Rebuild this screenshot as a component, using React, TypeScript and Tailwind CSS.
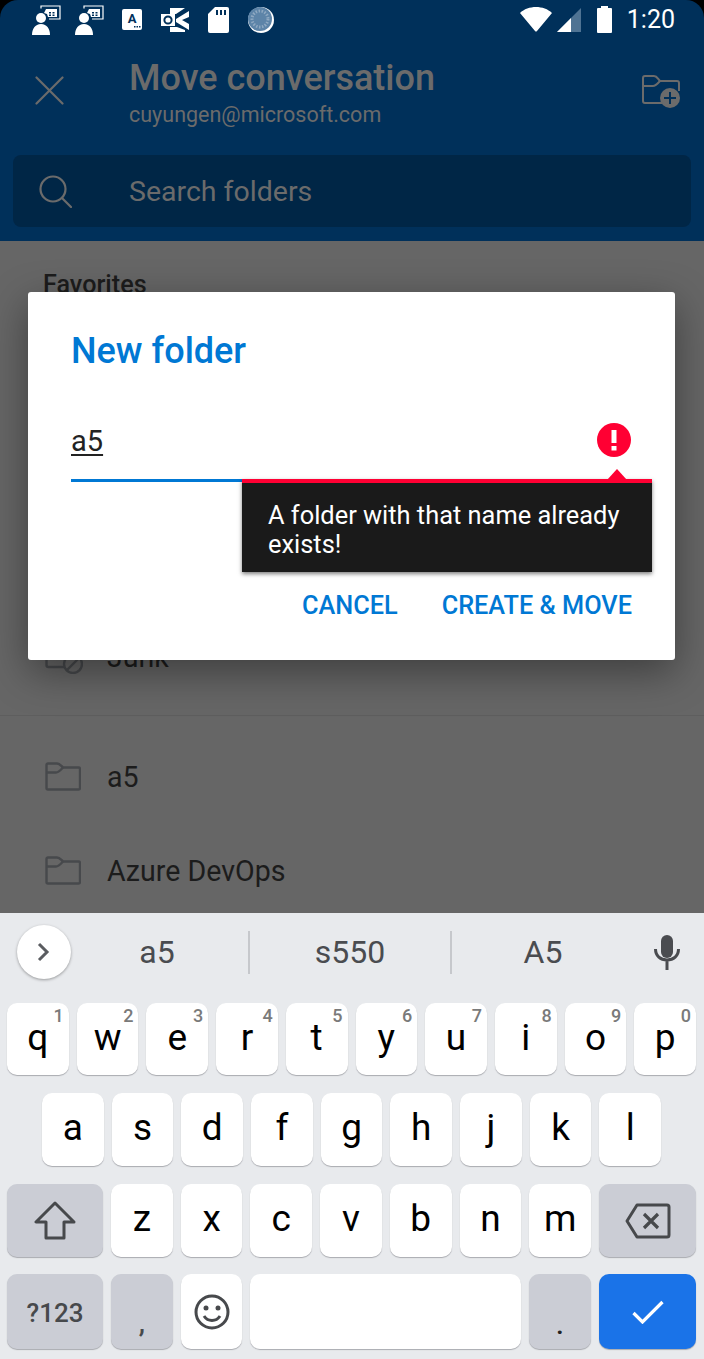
import type { ReactNode } from "react";

const row1 = [
  ["q", "1"],
  ["w", "2"],
  ["e", "3"],
  ["r", "4"],
  ["t", "5"],
  ["y", "6"],
  ["u", "7"],
  ["i", "8"],
  ["o", "9"],
  ["p", "0"],
];
const row2 = ["a", "s", "d", "f", "g", "h", "j", "k", "l"];
const row3 = ["z", "x", "c", "v", "b", "n", "m"];

function PresenterIcon() {
  return (
    <svg width="30" height="30" viewBox="0 0 30 30" fill="none">
      <circle cx="10" cy="13" r="5" fill="#fff" />
      <path d="M1 30c0-6 3-11 9-11s9 5 9 11z" fill="#fff" />
      <path d="M10 3.500V1h19v13H18" stroke="#fff" strokeWidth="1.200" />
      <path d="M15 4h11v8h-9l-1-3-3-1z" fill="#fff" />
      <path d="M18 7h2v1.500h-2zM21.500 7h2v1.500h-2zM21.500 9.500h2V11h-2zM18 9.500h2V11h-2z" fill="#00305a" />
    </svg>
  );
}

function StatusLeft() {
  return (
    <div className="flex items-center">
      <div className="ml-[31px]">
        <PresenterIcon />
      </div>
      <div className="ml-[13px]">
        <PresenterIcon />
      </div>
      <svg className="ml-[18px]" width="20" height="21" viewBox="0 0 20 21">
        <rect width="20" height="21" rx="2" fill="#fff" />
        <text x="10" y="14" fontFamily="Roboto" fontWeight="700" fontSize="13" textAnchor="middle" fill="#00305a">
          A
        </text>
        <path d="M12 17h1.500v1.500H12zM14.500 17H16v1.500h-1.500zM17 17h1.500v1.500H17z" fill="#00305a" />
      </svg>
      <svg className="ml-[19px]" width="29" height="24" viewBox="0 0 29 24">
        <path d="M0 6h14v12H0z" fill="#fff" />
        <circle cx="7" cy="12" r="3.600" fill="none" stroke="#00305a" strokeWidth="2" />
        <path d="M9 0h15l-9 6H9zM15 11l13-8v6l-7 3 7 4v6l-13-8zM9 19h7l8 3v2H9z" fill="#fff" />
      </svg>
      <svg className="ml-[18px]" width="21" height="26" viewBox="0 0 21 26">
        <path d="M7 0h12a2 2 0 0 1 2 2v22a2 2 0 0 1-2 2H2a2 2 0 0 1-2-2V7z" fill="#fff" />
        <path d="M8 3h2v5H8zM12 3h2v5h-2zM16 3h2v5h-2z" fill="#00305a" />
      </svg>
      <svg className="ml-[19px]" width="26" height="26" viewBox="0 0 26 26">
        <circle cx="13" cy="13" r="13" fill="#fff" />
        <circle cx="12" cy="12" r="12" fill="#5d84a8" />
        <circle cx="12" cy="12" r="8" fill="none" stroke="#8fa9c2" strokeWidth="3" strokeDasharray="1.500 1.500" />
      </svg>
    </div>
  );
}

function StatusRight() {
  return (
    <div className="flex items-center">
      <svg width="32" height="25" viewBox="0 0 32 25">
        <path d="M0 6C4 2 10 0 16 0s12 2 16 6L17 24a1.300 1.300 0 0 1-2 0z" fill="#fff" />
      </svg>
      <svg className="ml-[5px]" width="24" height="24" viewBox="0 0 24 24">
        <path d="M24 0v24H0z" fill="#4f7393" />
        <path d="M14 10v14H0z" fill="#fff" />
      </svg>
      <svg className="ml-[16px]" width="15" height="27" viewBox="0 0 15 27">
        <path d="M4 2V0h7v2h3a1 1 0 0 1 1 1v23a1 1 0 0 1-1 1H1a1 1 0 0 1-1-1V3a1 1 0 0 1 1-1z" fill="#fff" />
      </svg>
      <span className="ml-[15px] mr-[29px] text-[25px] leading-none text-white">1:20</span>
    </div>
  );
}

function Header() {
  return (
    <header className="h-[241px] bg-[#00305a]">
      <div className="flex h-[38px] items-center justify-between pt-[1px]">
        <StatusLeft />
        <StatusRight />
      </div>
      <div className="flex h-[117px] items-start">
        <svg className="ml-[35px] mt-[38px]" width="29" height="29" viewBox="0 0 29 29" fill="none" stroke="#6b6b6b" strokeWidth="2.200" strokeLinecap="round">
          <path d="M1.500 1.500l26 26M27.500 1.500l-26 26" />
        </svg>
        <div className="ml-[65px] flex-1 pt-[20px]">
          <div className="text-[36px] font-medium leading-[40px] text-[#6b6b6b]">Move conversation</div>
          <div className="mt-[4px] text-[21.500px] leading-[26px] text-[#6b6b6b]">cuyungen@microsoft.com</div>
        </div>
        <svg className="mr-[22px] mt-[37px]" width="40" height="34" viewBox="0 0 40 34" fill="none">
          <path
            d="M1 26V3a2 2 0 0 1 2-2h9c3 0 4 3 6 5h17a2 2 0 0 1 2 2v8M1 11h10c3 0 5-3 7-5M1 26a2 2 0 0 0 2 2h17"
            stroke="#6b6b6b"
            strokeWidth="2"
          />
          <circle cx="28" cy="23" r="10" fill="#6b6b6b" />
          <path d="M28 17v12M22 23h12" stroke="#00305a" strokeWidth="2" />
        </svg>
      </div>
      <div className="mx-[13px] flex h-[72px] items-center rounded-[8px] bg-[#002646]">
        <svg className="ml-[26px]" width="33" height="33" viewBox="0 0 33 33" fill="none" stroke="#6b6b6b" strokeWidth="2.200" strokeLinecap="round">
          <circle cx="14" cy="14" r="12.500" />
          <path d="M23 23l9 9" />
        </svg>
        <span className="ml-[57px] pt-[2px] text-[28.500px] text-[#6b6b6b]">Search folders</span>
      </div>
    </header>
  );
}

function FolderIcon() {
  return (
    <svg className="mt-[-2px]" width="36" height="29" viewBox="0 0 36 29" fill="none" stroke="#47494c" strokeWidth="2.400">
      <path d="M1.500 26V3A1.500 1.500 0 0 1 3 1.500h9c3 0 4 2.500 6 4h15.500A1.500 1.500 0 0 1 35 7v19a1.500 1.500 0 0 1-1.500 1.500H3A1.500 1.500 0 0 1 1.500 26z" />
      <path d="M1.500 10.500H11c3 0 5-3 7-5" />
    </svg>
  );
}

function JunkIcon() {
  return (
    <svg width="38" height="34" viewBox="0 0 38 34" fill="none" stroke="#47494c" strokeWidth="2.400">
      <path d="M1.500 25V3h33v10M1.500 25a2 2 0 0 0 2 2H19" />
      <circle cx="28" cy="24" r="9" />
      <path d="M22 30l12-12" />
    </svg>
  );
}

function FolderRow({ name }: { name: string }) {
  return (
    <div className="flex h-[94px] items-center pl-[45px]">
      <FolderIcon />
      <span className="ml-[26px] text-[28.600px] text-[#1c1c1c]">{name}</span>
    </div>
  );
}

function Dialog() {
  return (
    <div className="absolute left-[28px] top-[292px] h-[368px] w-[647px] rounded-[3px] bg-white shadow-[0_12px_40px_rgba(0,0,0,0.4)]">
      <h2 className="pl-[43px] pt-[37px] text-[36px] font-medium leading-[44px] text-[#0078d4]">New folder</h2>
      <div className="relative ml-[43px] mt-[48px] h-[61px] w-[581px] border-b-[3px] border-[#0078d4]">
        <span className="text-[29px] leading-[40px] text-[#222] underline underline-offset-[3px]">a5</span>
        <svg className="absolute left-[526px] top-[2px]" width="34" height="34" viewBox="0 0 34 34">
          <circle cx="17" cy="17" r="17" fill="#ff0033" />
          <path d="M14.500 7h5v13h-5zM14.500 23h5v4.500h-5z" fill="#fff" />
        </svg>
      </div>
      <div className="absolute left-[214px] top-[187px] w-[410px] border-t-[4px] border-[#ff0033] bg-[#1a1a1a] px-[26px] pb-[13px] pt-[18px] text-[25.400px] leading-[29px] text-white shadow-[0_2px_4px_rgba(0,0,0,0.5)]">
        A folder with that name already exists!
        <div className="absolute right-[25px] top-[-14px] h-0 w-0 border-x-[10px] border-b-[11px] border-x-transparent border-b-[#ff0033]" />
      </div>
      <div className="mt-[109px] flex justify-end gap-[44px] pr-[43px] text-[25.300px] font-medium leading-[30px] text-[#0078d4]">
        <span>CANCEL</span>
        <span>CREATE &amp; MOVE</span>
      </div>
    </div>
  );
}

function Key({ children, hint, dark, className = "" }: { children: ReactNode; hint?: string; dark?: boolean; className?: string }) {
  return (
    <div
      className={`relative flex items-center justify-center rounded-[10px] shadow-[0_1px_1px_#a9abb0] ${
        dark ? "bg-[#cbcdd5]" : "bg-white"
      } ${className}`}
    >
      {children}
      {hint && (
        <span className="absolute right-[5px] top-[3px] text-[18px] font-medium leading-[20px] text-[#7a7a7a]">{hint}</span>
      )}
    </div>
  );
}

function Keyboard() {
  const letter = "mb-[4px] text-[37px] leading-none text-black";
  return (
    <div className="h-[446px] bg-[#e8eaed]">
      <div className="flex h-[90px] items-center pb-[12px] text-[32px] text-[#4a4c50]">
        <div className="ml-[17px] flex h-[54px] w-[54px] shrink-0 items-center justify-center rounded-full bg-white shadow-[0_1px_3px_rgba(0,0,0,0.35)]">
          <svg width="14" height="20" viewBox="0 0 14 20" fill="none" stroke="#5a5c60" strokeWidth="3">
            <path d="M2 2l8 8-8 8" />
          </svg>
        </div>
        <div className="flex h-[43px] w-[177px] items-center justify-center pr-[5px]">a5</div>
        <div className="flex h-[43px] w-[204px] items-center justify-center border-x-2 border-[#c6c8cc]">s550</div>
        <div className="flex h-[43px] w-[182px] items-center justify-center">A5</div>
        <svg className="ml-[20px]" width="26" height="35" viewBox="0 0 26 35" fill="none">
          <rect x="7" y="0" width="12" height="23" rx="6" fill="#4a4c50" />
          <path d="M1.500 14c0 7 5 11 11.500 11s11.500-4 11.500-11M13 25v10" stroke="#4a4c50" strokeWidth="3" />
        </svg>
      </div>
      <div className="flex h-[72px] gap-[8px] pl-[7px] pr-[8px]">
        {row1.map(([k, n]) => (
          <Key key={k} hint={n} className="flex-1">
            <span className={letter}>{k}</span>
          </Key>
        ))}
      </div>
      <div className="mt-[18px] flex h-[73px] gap-[8px] pl-[42px] pr-[43px]">
        {row2.map((k) => (
          <Key key={k} className="flex-1">
            <span className={letter}>{k}</span>
          </Key>
        ))}
      </div>
      <div className="mt-[18px] flex h-[73px] gap-[8px] pl-[7px] pr-[8px]">
        <Key dark className="w-[96px] shrink-0">
          <svg width="42" height="39" viewBox="0 0 42 39" fill="none" stroke="#47494c" strokeWidth="3" strokeLinejoin="round">
            <path d="M21 2L2 21h10v16h18V21h10z" />
          </svg>
        </Key>
        {row3.map((k) => (
          <Key key={k} className="flex-1">
            <span className={letter}>{k}</span>
          </Key>
        ))}
        <Key dark className="w-[97px] shrink-0">
          <svg width="46" height="36" viewBox="0 0 46 36" fill="none" stroke="#47494c" strokeWidth="3" strokeLinejoin="round">
            <path d="M12 2h30a2 2 0 0 1 2 2v28a2 2 0 0 1-2 2H12L2 18z" />
            <path d="M19 11l14 14M33 11L19 25" strokeWidth="3.200" />
          </svg>
        </Key>
      </div>
      <div className="mt-[17px] flex h-[75px] gap-[8px] pl-[7px] pr-[8px]">
        <Key dark className="w-[96px] shrink-0">
          <span className="pt-[3px] text-[26px] font-medium text-[#47494c]">?123</span>
        </Key>
        <Key dark className="w-[62px] shrink-0">
          <span className="mt-[22px] text-[28px] font-medium leading-none text-[#47494c]">,</span>
        </Key>
        <Key className="w-[61px] shrink-0">
          <svg width="36" height="36" viewBox="0 0 36 36" fill="none" stroke="#47494c" strokeWidth="3">
            <circle cx="18" cy="18" r="16" />
            <circle cx="12" cy="14" r="2.500" fill="#47494c" stroke="none" />
            <circle cx="24" cy="14" r="2.500" fill="#47494c" stroke="none" />
            <path d="M10 22c2 3 5 4.500 8 4.500s6-1.500 8-4.500" />
          </svg>
        </Key>
        <Key className="flex-1">{null}</Key>
        <Key dark className="w-[62px] shrink-0">
          <span className="mt-[26px] text-[28px] font-medium leading-none text-[#222]">.</span>
        </Key>
        <Key className="w-[97px] shrink-0 !bg-[#1a73e8]">
          <svg width="32" height="24" viewBox="0 0 32 24" fill="none" stroke="#fff" strokeWidth="3.200">
            <path d="M1.500 13l9 9L30.500 2" />
          </svg>
        </Key>
      </div>
    </div>
  );
}

export default function App() {
  return (
    <div className="relative h-[1359px] w-[704px] overflow-hidden bg-black font-['Roboto',sans-serif]">
      <div className="relative overflow-hidden rounded-t-[18px]">
        <Header />
        <div className="h-[672px] overflow-hidden bg-[#666666]">
          <div className="pl-[43px] pt-[29px] text-[25.200px] font-medium leading-[30px] text-[#1c1c1c]">Favorites</div>
          <div className="mt-[337px] flex h-[40px] items-center pl-[45px]">
            <JunkIcon />
            <span className="ml-[24px] text-[28.600px] text-[#1c1c1c]">Junk</span>
          </div>
          <div className="mt-[38px] border-t border-[#5e5e5e]" />
          <div className="pt-[14px]">
            <FolderRow name="a5" />
            <FolderRow name="Azure DevOps" />
          </div>
        </div>
        <Keyboard />
        <Dialog />
      </div>
    </div>
  );
}
